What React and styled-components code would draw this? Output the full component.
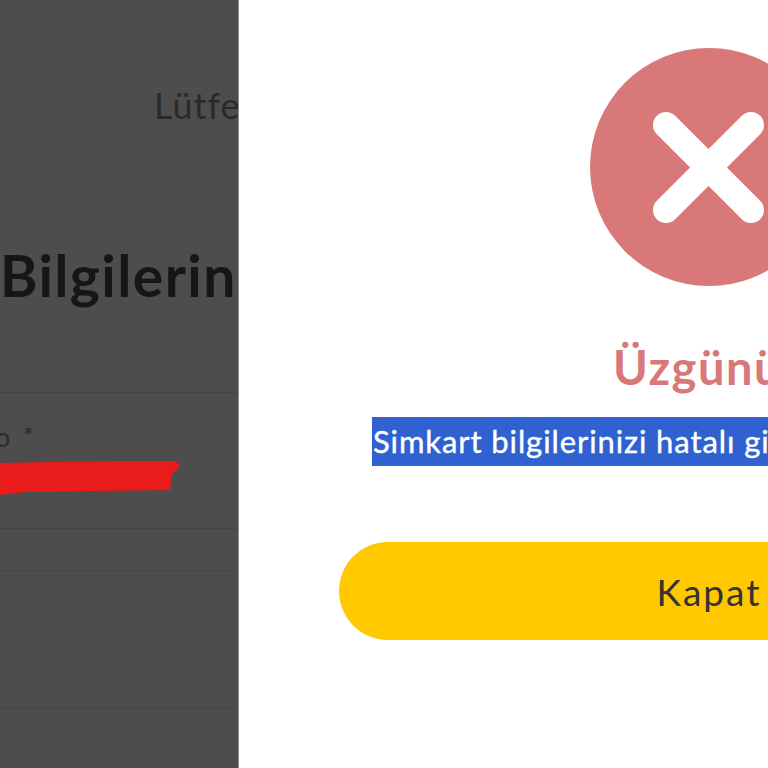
import React from 'react';
import styled, { createGlobalStyle } from 'styled-components';

const GlobalStyle = createGlobalStyle`
  html, body {
    margin: 0;
    padding: 0;
    background: #fff;
    overflow: hidden;
  }
`;

const Page = styled.div`
  display: flex;
  width: 768px;
  height: 768px;
  overflow: hidden;
  font-family: Lato, "Open Sans", sans-serif;
`;

const Backdrop = styled.div`
  flex: 0 0 239px;
  width: 239px;
  box-sizing: border-box;
  padding-top: 83px;
  overflow: hidden;
  background: #4d4d4d;
  border-right: 1px solid #8d8d8d;
`;

const Notice = styled.div`
  padding-left: 154px;
  font-size: 36px;
  line-height: 44px;
  letter-spacing: 1px;
  white-space: nowrap;
  color: #2a2a2c;
`;

const Heading = styled.h2`
  margin: 118px 0 0;
  font-size: 57px;
  line-height: 60px;
  font-weight: 700;
  letter-spacing: 1.4px;
  white-space: nowrap;
  color: #15161a;
`;

const Rows = styled.div`
  margin-top: 87px;
`;

const Row = styled.div`
  box-sizing: border-box;
  height: ${props => props.height}px;
  border-top: 1px solid #454545;
`;

const FieldLabel = styled.div`
  display: flex;
  justify-content: flex-end;
  width: 37px;
  padding-top: 29px;
  font-size: 26px;
  line-height: 30px;
  letter-spacing: 3px;
  white-space: nowrap;
  color: #2b2b2d;
`;

const Scribble = styled.svg`
  display: block;
  width: 182px;
  height: 36px;
  margin-top: 8px;
  filter: blur(0.6px);
`;

const Dialog = styled.div`
  flex: 0 0 940px;
  width: 940px;
  box-sizing: border-box;
  display: flex;
  flex-direction: column;
  align-items: center;
  padding: 48px 100px 0 100px;
  background: #fff;
`;

const ErrorBadge = styled.svg`
  display: block;
  flex: none;
  width: 238px;
  height: 238px;
`;

const Title = styled.h3`
  margin: 56px 0 0;
  font-size: 47px;
  line-height: 50px;
  font-weight: 700;
  letter-spacing: 1.5px;
  white-space: nowrap;
  color: #d97878;
`;

const Message = styled.div`
  flex: none;
  width: 674px;
  height: 49px;
  margin-top: 25px;
  padding-left: 1px;
  box-sizing: border-box;
  font-size: 31px;
  line-height: 49px;
  letter-spacing: 0.9px;
  -webkit-text-stroke: 0.4px #fff;
  white-space: nowrap;
  overflow: hidden;
  color: #fff;
  background: #2f62d0;
`;

const CloseButton = styled.button`
  flex: none;
  width: 740px;
  height: 98px;
  margin-top: 76px;
  border: 0;
  border-radius: 49px;
  font-family: inherit;
  font-size: 37px;
  letter-spacing: 2px;
  color: #333;
  background: #ffc800;
`;

const App = () => (
  <Page>
    <GlobalStyle />
    <Backdrop>
      <Notice>Lütfen bilgilerinizi girin</Notice>
      <Heading>Bilgilerin</Heading>
      <Rows>
        <Row height={136}>
          <FieldLabel>Seri No *</FieldLabel>
          <Scribble viewBox="0 0 182 36">
            <path
              d="M0 3 L110 1 L176 1 L180 7 L172 14 L170 30 L25 32 L0 35 Z"
              fill="#e91b1b"
            />
          </Scribble>
        </Row>
        <Row height={42} />
        <Row height={138} />
        <Row height={60} />
      </Rows>
    </Backdrop>
    <Dialog>
      <ErrorBadge viewBox="0 0 238 238">
        <circle cx="119" cy="119" r="119" fill="#d97878" />
        <path
          d="M76 77 L161 162 M161 77 L76 162"
          stroke="#fff"
          strokeWidth="26"
          strokeLinecap="round"
          fill="none"
        />
      </ErrorBadge>
      <Title>Üzgünüz</Title>
      <Message>Simkart bilgilerinizi hatalı girdiniz.</Message>
      <CloseButton>Kapat</CloseButton>
    </Dialog>
  </Page>
);

export default App;
